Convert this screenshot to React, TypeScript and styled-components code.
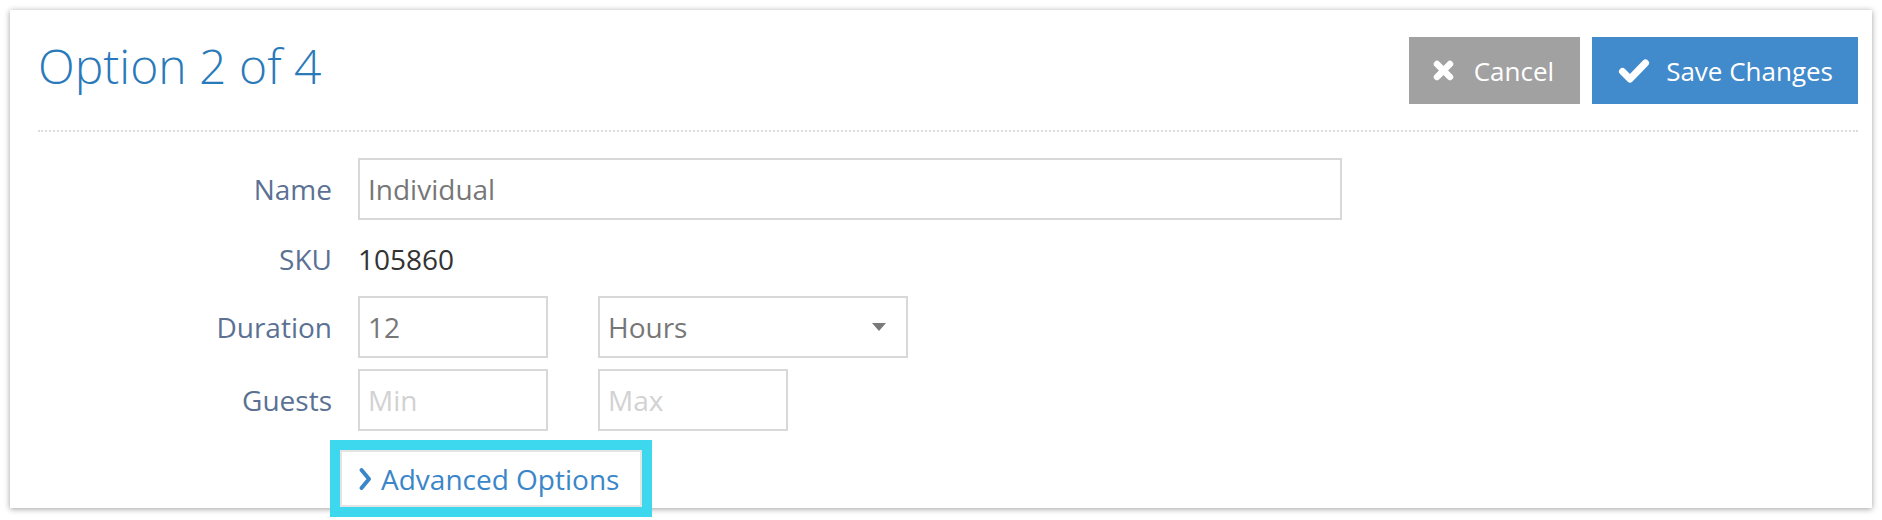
import React from "react";
import styled, { createGlobalStyle } from "styled-components";

const GlobalStyle = createGlobalStyle`
  html, body {
    margin: 0;
    padding: 0;
    background: #ffffff;
    font-family: "Open Sans", "Noto Sans", sans-serif;
  }
  * { box-sizing: border-box; }
`;

const Page = styled.div`
  padding: 10px;
  width: 1882px;
  height: 520px;
`;

const Card = styled.section`
  width: 1862px;
  height: 498px;
  background: #ffffff;
  box-shadow: 0 1px 6px rgba(0, 0, 0, 0.38);
  padding: 27px 14px 0 28px;
  display: flex;
  flex-direction: column;
`;

const Header = styled.header`
  display: flex;
  align-items: center;
  justify-content: space-between;
  padding-bottom: 26px;
  border-bottom: 2px dotted #dcdcdc;
`;

const Title = styled.h1`
  margin: 0 0 10px 0;
  font-family: "Open Sans", sans-serif;
  font-weight: 300;
  font-size: 48px;
  line-height: 1;
  color: #2a7aba;
`;

const Actions = styled.div`
  display: flex;
  gap: 12px;
`;

const ActionButton = styled.button<{ $variant: "neutral" | "primary" }>`
  height: 67px;
  display: flex;
  align-items: center;
  gap: ${(p) => (p.$variant === "primary" ? "16px" : "20px")};
  padding: 0 ${(p) => (p.$variant === "primary" ? "25px" : "26px")} 0
    ${(p) => (p.$variant === "primary" ? "26px" : "24px")};
  border: none;
  border-radius: 0;
  background: ${(p) => (p.$variant === "primary" ? "#418acb" : "#a1a1a1")};
  color: #ffffff;
  font-family: "Open Sans", sans-serif;
  font-size: 26px;
  font-weight: 400;
  cursor: pointer;
`;

const Form = styled.div`
  display: flex;
  flex-direction: column;
  padding-top: 25px;
`;

const Row = styled.div<{ $mt?: number }>`
  display: grid;
  grid-template-columns: 294px auto;
  column-gap: 26px;
  align-items: center;
  margin-top: ${(p) => p.$mt ?? 0}px;
`;

const Label = styled.label`
  text-align: right;
  font-size: 28px;
  color: #5b7194;
`;

const Controls = styled.div<{ $height: number }>`
  display: flex;
  align-items: center;
  gap: 50px;
  height: ${(p) => p.$height}px;
`;

const TextInput = styled.input<{ $width: number }>`
  width: ${(p) => p.$width}px;
  height: 62px;
  border: 2px solid #d8d8d8;
  border-radius: 0;
  padding: 0 8px;
  font-family: "Open Sans", sans-serif;
  font-size: 28px;
  color: #777777;
  background: #fff;
  outline: none;
  &::placeholder {
    color: #d2d2d2;
  }
`;

const Value = styled.span`
  font-size: 28px;
  color: #333333;
`;

const SelectBox = styled.div`
  width: 310px;
  height: 62px;
  border: 2px solid #d8d8d8;
  display: flex;
  align-items: center;
  justify-content: space-between;
  padding: 0 20px 0 8px;
  font-size: 28px;
  color: #777777;
`;

const Caret = styled.span`
  width: 0;
  height: 0;
  border-left: 7px solid transparent;
  border-right: 7px solid transparent;
  border-top: 8px solid #7a7a7a;
`;

const AdvancedRow = styled.div`
  display: flex;
  margin-top: 19px;
  padding-left: 302px;
`;

const AdvancedButton = styled.button`
  width: 302px;
  height: 57px;
  display: flex;
  align-items: center;
  gap: 9px;
  padding: 0 0 0 16px;
  background: #ffffff;
  border: 2px solid #e4e4e4;
  outline: 10px solid #3ed8ee;
  font-family: "Open Sans", sans-serif;
  font-size: 28px;
  color: #3a86c8;
  cursor: pointer;
`;

const CrossIcon = () => (
  <svg width="21" height="21" viewBox="0 0 21 21" aria-hidden="true">
    <path
      d="M4 4 L17 17 M17 4 L4 17"
      stroke="#ffffff"
      strokeWidth="6.5"
      strokeLinecap="round"
    />
  </svg>
);

const CheckIcon = () => (
  <svg width="32" height="26" viewBox="0 0 32 26" aria-hidden="true">
    <path
      d="M4.5 13.5 L12 21 L27.5 5"
      fill="none"
      stroke="#ffffff"
      strokeWidth="7"
      strokeLinecap="round"
      strokeLinejoin="round"
    />
  </svg>
);

const ChevronIcon = () => (
  <svg width="14" height="26" viewBox="0 0 14 26" aria-hidden="true">
    <path
      d="M3.5 4 L11 13 L3.5 22"
      fill="none"
      stroke="#3a86c8"
      strokeWidth="4"
      strokeLinecap="round"
      strokeLinejoin="round"
    />
  </svg>
);

export default function App() {
  return (
    <>
      <GlobalStyle />
      <Page>
        <Card>
          <Header>
            <Title>Option 2 of 4</Title>
            <Actions>
              <ActionButton $variant="neutral">
                <CrossIcon />
                Cancel
              </ActionButton>
              <ActionButton $variant="primary">
                <CheckIcon />
                Save Changes
              </ActionButton>
            </Actions>
          </Header>
          <Form>
            <Row>
              <Label>Name</Label>
              <Controls $height={64}>
                <TextInput $width={984} defaultValue="Individual" />
              </Controls>
            </Row>
            <Row $mt={8}>
              <Label>SKU</Label>
              <Controls $height={60}>
                <Value>105860</Value>
              </Controls>
            </Row>
            <Row $mt={7}>
              <Label>Duration</Label>
              <Controls $height={62}>
                <TextInput $width={190} defaultValue="12" />
                <SelectBox>
                  <span>Hours</span>
                  <Caret />
                </SelectBox>
              </Controls>
            </Row>
            <Row $mt={11}>
              <Label>Guests</Label>
              <Controls $height={62}>
                <TextInput $width={190} placeholder="Min" />
                <TextInput $width={190} placeholder="Max" />
              </Controls>
            </Row>
            <AdvancedRow>
              <AdvancedButton>
                <ChevronIcon />
                Advanced Options
              </AdvancedButton>
            </AdvancedRow>
          </Form>
        </Card>
      </Page>
    </>
  );
}
